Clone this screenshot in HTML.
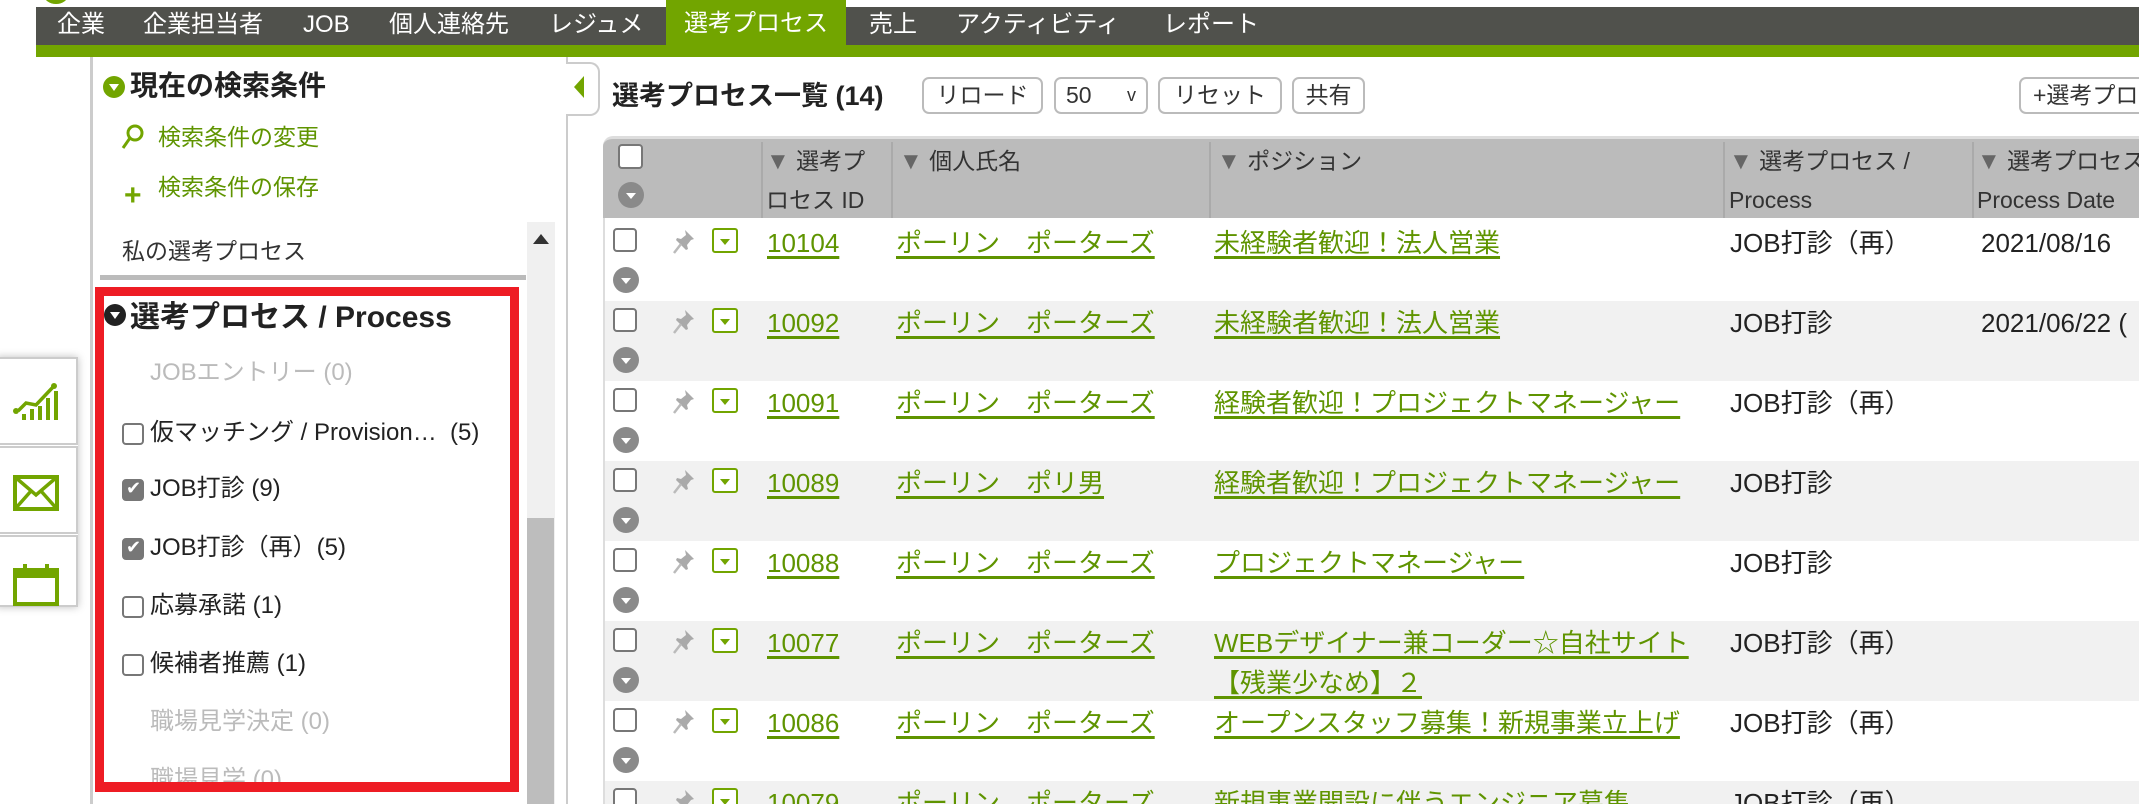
<!DOCTYPE html>
<html><head><meta charset="utf-8"><style>
*{margin:0;padding:0;box-sizing:border-box}
html{width:2139px;height:804px;overflow:hidden}
body{width:2139px;height:804px;overflow:hidden;background:#fff;font-family:"Liberation Sans","Noto Sans CJK JP",sans-serif;position:relative;color:#222}
.a{position:absolute;white-space:nowrap}
#nav{left:36px;top:7px;width:2103px;height:38px;background:#50514c}
#nav span{position:absolute;top:3px;font-size:24px;color:#fff;line-height:30px}
#nav .act{background:#72a500;top:-7px;height:45px;padding:9px 18px 0}
#gr{left:36px;top:45px;width:2103px;height:12px;background:#72a500}
.cb{position:absolute;width:21px;height:21px;border:2px solid #777;border-radius:4px;background:#fff}
.cbk{background:#777}
.gc{position:absolute;width:26px;height:26px;border-radius:50%;background:#8a8a8a}
.gc:after{content:"";position:absolute;left:8px;top:11px;border-left:5px solid transparent;border-right:5px solid transparent;border-top:6px solid #fff}
.gb{position:absolute;width:26px;height:25px;border:2px solid #72a500;border-radius:3px;background:#fff}
.gb:after{content:"";position:absolute;left:6px;top:9px;border-left:5px solid transparent;border-right:5px solid transparent;border-top:6px solid #72a500}
.row{position:absolute;left:603px;width:1536px;height:80px;font-size:26px;line-height:40px;overflow:hidden}
.row span{position:absolute;top:2px;white-space:nowrap}
.row>.cb{width:24px;height:24px}
.lk{color:#5f9400;text-decoration:underline;text-decoration-thickness:3px;text-underline-offset:4px}
.pin{position:absolute;left:70px;top:8px}
.btn{position:absolute;top:77px;height:37px;border:2px solid #bbb;border-radius:7px;font-size:23px;line-height:32px;text-align:center;color:#333;background:#fff;white-space:nowrap;overflow:hidden}
.li{position:absolute;left:122px;font-size:24px;line-height:30px;white-space:nowrap}
.li .cb{left:0;top:5px;width:22px;height:22px}
.dim{color:#bbb;left:150px}
.th{position:absolute;top:6px;font-size:23px;line-height:38px;color:#333}
.sep{position:absolute;top:6px;width:2px;height:76px;background:#aaa}
.tri{color:#666;font-size:24px}
</style></head><body>
<div class="a" style="left:44px;top:-14px;width:24px;height:18px;border-radius:50%;background:#72a500"></div>
<div id="nav" class="a">
<span style="left:21px">企業</span><span style="left:107px">企業担当者</span><span style="left:267px">JOB</span><span style="left:353px">個人連絡先</span><span style="left:513px">レジュメ</span>
<span class="act" style="left:630px">選考プロセス</span>
<span style="left:833px">売上</span><span style="left:920px">アクティビティ</span><span style="left:1127px">レポート</span>
</div>
<div id="gr" class="a"></div>

<!-- left panel -->
<div class="a" style="left:90px;top:57px;width:3px;height:747px;background:#ccc"></div>
<div class="a" style="left:103px;top:76px;width:22px;height:22px;border-radius:50%;background:#72a500"></div>
<div class="a" style="left:109px;top:84px;border-left:5px solid transparent;border-right:5px solid transparent;border-top:7px solid #fff"></div>
<div class="a" style="left:130px;top:68px;font-size:28px;font-weight:bold;line-height:36px">現在の検索条件</div>
<svg class="a" style="left:121px;top:124px" width="24" height="26" viewBox="0 0 24 26"><circle cx="14" cy="9" r="7" fill="none" stroke="#72a500" stroke-width="3"/><path d="M9 14 L2 24" stroke="#72a500" stroke-width="3"/></svg>
<div class="a" style="left:158px;top:122px;font-size:23px;color:#5f9400;line-height:30px">検索条件の変更</div>
<div class="a" style="left:124px;top:186px;font-size:30px;color:#72a500;font-weight:bold;line-height:20px">+</div>
<div class="a" style="left:158px;top:172px;font-size:23px;color:#5f9400;line-height:30px">検索条件の保存</div>
<div class="a" style="left:122px;top:236px;font-size:23px;line-height:30px;color:#333">私の選考プロセス</div>
<div class="a" style="left:100px;top:275px;width:426px;height:5px;background:#bbb"></div>
<div class="a" style="left:527px;top:222px;width:28px;height:582px;background:#f0f0f0"></div>
<div class="a" style="left:533px;top:234px;border-left:8px solid transparent;border-right:8px solid transparent;border-bottom:10px solid #333"></div>
<div class="a" style="left:527px;top:518px;width:27px;height:286px;background:#bdbdbd"></div>
<div class="a" style="left:95px;top:287px;width:424px;height:505px;border:9px solid #ee1c24"></div>
<div class="a" style="left:104px;top:304px;width:22px;height:22px;border-radius:50%;background:#222"></div>
<div class="a" style="left:110px;top:312px;border-left:5px solid transparent;border-right:5px solid transparent;border-top:7px solid #fff"></div>
<div class="a" style="left:130px;top:300px;font-size:30px;font-weight:bold;line-height:36px">選考プロセス / Process</div>
<div class="li dim" style="top:358px">JOBエントリー (0)</div>
<div class="li" style="top:418px"><div class="cb"></div><span style="margin-left:28px">仮マッチング / Provision…&nbsp;&nbsp;(5)</span></div>
<div class="li" style="top:474px"><div class="cb cbk"></div><span style="position:absolute;left:4px;top:-1px;color:#fff;font-size:18px">✔</span><span style="margin-left:28px">JOB打診 (9)</span></div>
<div class="li" style="top:533px"><div class="cb cbk"></div><span style="position:absolute;left:4px;top:-1px;color:#fff;font-size:18px">✔</span><span style="margin-left:28px">JOB打診（再）(5)</span></div>
<div class="li" style="top:591px"><div class="cb"></div><span style="margin-left:28px">応募承諾 (1)</span></div>
<div class="li" style="top:649px"><div class="cb"></div><span style="margin-left:28px">候補者推薦 (1)</span></div>
<div class="li dim" style="top:707px">職場見学決定 (0)</div>
<div class="li dim" style="top:765px">職場見学 (0)</div>
<div class="a" style="left:104px;top:782px;width:415px;height:10px;background:#ee1c24"></div>

<!-- side tabs -->
<div class="a" style="left:-4px;top:357px;width:82px;height:250px;box-shadow:0 0 8px rgba(0,0,0,.25)"></div>
<div class="a" style="left:-4px;top:357px;width:82px;height:88px;background:#fff;border:2px solid #ccc"></div>
<div class="a" style="left:-4px;top:446px;width:82px;height:88px;background:#fff;border:2px solid #ccc"></div>
<div class="a" style="left:-4px;top:535px;width:82px;height:72px;background:#fff;border:2px solid #ccc"></div>
<svg class="a" style="left:12px;top:378px" width="48" height="45" viewBox="0 0 48 45"><g stroke="#72a500" stroke-width="3.5" fill="none"><path d="M6 33 L14 25 L24 27 L42 8"/></g><circle cx="42" cy="8" r="3" fill="#72a500"/><circle cx="4" cy="33" r="3" fill="#72a500"/><g stroke="#72a500" stroke-width="4"><path d="M12 36V42M20 31V42M28 28V42M36 20V42M44 13V42"/></g></svg>
<svg class="a" style="left:13px;top:475px" width="46" height="36" viewBox="0 0 46 36"><rect x="2" y="2" width="42" height="32" fill="none" stroke="#72a500" stroke-width="4"/><path d="M2 2 L23 20 L44 2 M2 34 L18 16 M44 34 L28 16" stroke="#72a500" stroke-width="3.5" fill="none"/></svg>
<svg class="a" style="left:13px;top:562px" width="46" height="44" viewBox="0 0 46 44"><rect x="2" y="8" width="42" height="34" fill="none" stroke="#72a500" stroke-width="4"/><rect x="2" y="8" width="42" height="8" fill="#72a500"/><path d="M12 2V12M34 2V12" stroke="#72a500" stroke-width="4"/></svg>

<!-- main -->
<div class="a" style="left:566px;top:57px;width:2px;height:747px;background:#ccc"></div>
<div class="a" style="left:566px;top:62px;width:34px;height:54px;border:2px solid #ccc;border-left:none;border-radius:0 10px 10px 0;background:#fff"></div>
<div class="a" style="left:574px;top:76px;border-top:11px solid transparent;border-bottom:11px solid transparent;border-right:10px solid #72a500"></div>
<div class="a" style="left:612px;top:78px;font-size:27px;font-weight:bold;line-height:36px">選考プロセス一覧 (14)</div>
<div class="btn" style="left:922px;width:121px">リロード</div>
<div class="btn" style="left:1054px;width:94px;text-align:left;padding-left:10px">50 <span style="position:absolute;right:10px;font-size:18px">v</span></div>
<div class="btn" style="left:1158px;width:124px">リセット</div>
<div class="btn" style="left:1292px;width:73px">共有</div>
<div class="btn" style="left:2019px;width:140px;text-align:left;padding-left:12px">+選考プロセス</div>

<div class="a" style="left:603px;top:136px;width:1536px;height:82px;background:#bbb;border-radius:10px 0 0 0;border-top:3px solid #ddd"></div>
<div class="a" style="left:603px;top:136px;width:1536px;height:82px">
<div class="cb" style="left:15px;top:8px;width:25px;height:25px"></div>
<div class="gc" style="left:15px;top:46px"></div>
<div class="sep" style="left:158px"></div><div class="th" style="left:163px"><span class="tri">▼</span> 選考プ<br>ロセス ID</div>
<div class="sep" style="left:288px"></div><div class="th" style="left:296px"><span class="tri">▼</span> 個人氏名</div>
<div class="sep" style="left:606px"></div><div class="th" style="left:614px"><span class="tri">▼</span> ポジション</div>
<div class="sep" style="left:1120px"></div><div class="th" style="left:1126px"><span class="tri">▼</span> 選考プロセス /<br>Process</div>
<div class="sep" style="left:1369px"></div><div class="th" style="left:1374px"><span class="tri">▼</span> 選考プロセス<br>Process Date</div>
</div>

<svg width="0" height="0" style="position:absolute"><defs><g id="pin"><path d="M12 1 L21 10 L18 11 L14 16 L15 20 L13 21 L3 11 L4 9 L8 10 L13 6 L12 1Z" fill="#aaa"/><path d="M8 15 L1 24" stroke="#bbb" stroke-width="2.5"/></g></defs></svg>

<!-- rows -->
<div class="row" style="top:221px;background:#fff"><div class="cb" style="left:10px;top:7px"></div><svg class="pin" width="24" height="26"><use href="#pin"/></svg><div class="gb" style="left:109px;top:7px"></div><div class="gc" style="left:10px;top:46px"></div><span class="lk" style="left:164px">10104</span><span class="lk" style="left:293px">ポーリン　ポーターズ</span><span class="lk" style="left:611px">未経験者歓迎！法人営業</span><span style="left:1127px">JOB打診（再）</span><span style="left:1378px">2021/08/16</span></div>
<div class="row" style="top:301px;background:#f1f1f1"><div class="cb" style="left:10px;top:7px"></div><svg class="pin" width="24" height="26"><use href="#pin"/></svg><div class="gb" style="left:109px;top:7px"></div><div class="gc" style="left:10px;top:46px"></div><span class="lk" style="left:164px">10092</span><span class="lk" style="left:293px">ポーリン　ポーターズ</span><span class="lk" style="left:611px">未経験者歓迎！法人営業</span><span style="left:1127px">JOB打診</span><span style="left:1378px">2021/06/22 (</span></div>
<div class="row" style="top:381px;background:#fff"><div class="cb" style="left:10px;top:7px"></div><svg class="pin" width="24" height="26"><use href="#pin"/></svg><div class="gb" style="left:109px;top:7px"></div><div class="gc" style="left:10px;top:46px"></div><span class="lk" style="left:164px">10091</span><span class="lk" style="left:293px">ポーリン　ポーターズ</span><span class="lk" style="left:611px">経験者歓迎！プロジェクトマネージャー</span><span style="left:1127px">JOB打診（再）</span></div>
<div class="row" style="top:461px;background:#f1f1f1"><div class="cb" style="left:10px;top:7px"></div><svg class="pin" width="24" height="26"><use href="#pin"/></svg><div class="gb" style="left:109px;top:7px"></div><div class="gc" style="left:10px;top:46px"></div><span class="lk" style="left:164px">10089</span><span class="lk" style="left:293px">ポーリン　ポリ男</span><span class="lk" style="left:611px">経験者歓迎！プロジェクトマネージャー</span><span style="left:1127px">JOB打診</span></div>
<div class="row" style="top:541px;background:#fff"><div class="cb" style="left:10px;top:7px"></div><svg class="pin" width="24" height="26"><use href="#pin"/></svg><div class="gb" style="left:109px;top:7px"></div><div class="gc" style="left:10px;top:46px"></div><span class="lk" style="left:164px">10088</span><span class="lk" style="left:293px">ポーリン　ポーターズ</span><span class="lk" style="left:611px">プロジェクトマネージャー</span><span style="left:1127px">JOB打診</span></div>
<div class="row" style="top:621px;background:#f1f1f1"><div class="cb" style="left:10px;top:7px"></div><svg class="pin" width="24" height="26"><use href="#pin"/></svg><div class="gb" style="left:109px;top:7px"></div><div class="gc" style="left:10px;top:46px"></div><span class="lk" style="left:164px">10077</span><span class="lk" style="left:293px">ポーリン　ポーターズ</span><span class="lk" style="left:611px">WEBデザイナー兼コーダー☆自社サイト<br>【残業少なめ】２</span><span style="left:1127px">JOB打診（再）</span></div>
<div class="row" style="top:701px;background:#fff"><div class="cb" style="left:10px;top:7px"></div><svg class="pin" width="24" height="26"><use href="#pin"/></svg><div class="gb" style="left:109px;top:7px"></div><div class="gc" style="left:10px;top:46px"></div><span class="lk" style="left:164px">10086</span><span class="lk" style="left:293px">ポーリン　ポーターズ</span><span class="lk" style="left:611px">オープンスタッフ募集！新規事業立上げ</span><span style="left:1127px">JOB打診（再）</span></div>
<div class="row" style="top:781px;height:23px;background:#f1f1f1"><div class="cb" style="left:10px;top:7px"></div><svg class="pin" width="24" height="26"><use href="#pin"/></svg><div class="gb" style="left:109px;top:7px"></div><span class="lk" style="left:164px">10079</span><span class="lk" style="left:293px">ポーリン　ポーターズ</span><span class="lk" style="left:611px">新規事業開設に伴うエンジニア募集</span><span style="left:1127px">JOB打診（再）</span></div>
<div class="a" style="left:603px;top:218px;width:2px;height:586px;background:#ddd"></div>
</body></html>
